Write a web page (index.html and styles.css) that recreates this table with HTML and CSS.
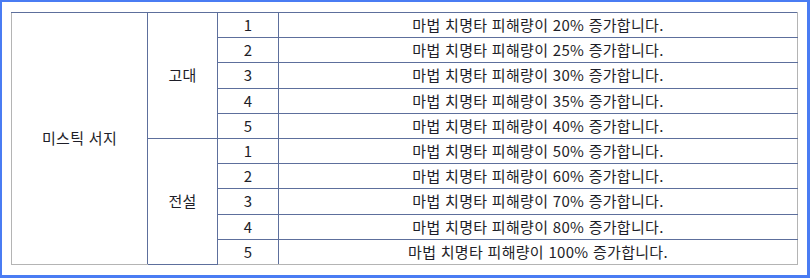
FILE: index.html
```html
<!DOCTYPE html>
<html lang="ko">
<head>
<meta charset="utf-8">
<link rel="stylesheet" href="styles.css">
</head>
<body>
<div class="frame">
  <table class="skill">
    <colgroup>
      <col class="c-name"><col class="c-tier"><col class="c-lv"><col class="c-desc">
    </colgroup>
    <tbody>
      <tr><td class="name" rowspan="10">미스틱 서지</td><td class="tier" rowspan="5">고대</td><td class="lv">1</td><td class="desc">마법 치명타 피해량이 20% 증가합니다.</td></tr>
      <tr><td class="lv">2</td><td class="desc">마법 치명타 피해량이 25% 증가합니다.</td></tr>
      <tr><td class="lv">3</td><td class="desc">마법 치명타 피해량이 30% 증가합니다.</td></tr>
      <tr><td class="lv">4</td><td class="desc">마법 치명타 피해량이 35% 증가합니다.</td></tr>
      <tr><td class="lv">5</td><td class="desc">마법 치명타 피해량이 40% 증가합니다.</td></tr>
      <tr><td class="tier" rowspan="5">전설</td><td class="lv">1</td><td class="desc">마법 치명타 피해량이 50% 증가합니다.</td></tr>
      <tr><td class="lv">2</td><td class="desc">마법 치명타 피해량이 60% 증가합니다.</td></tr>
      <tr><td class="lv">3</td><td class="desc">마법 치명타 피해량이 70% 증가합니다.</td></tr>
      <tr><td class="lv">4</td><td class="desc">마법 치명타 피해량이 80% 증가합니다.</td></tr>
      <tr><td class="lv">5</td><td class="desc">마법 치명타 피해량이 100% 증가합니다.</td></tr>
    </tbody>
  </table>
</div>
</body>
</html>
```
FILE: styles.css
```css
html, body {
  margin: 0;
  padding: 0;
  background: #ffffff;
}
.frame {
  box-sizing: border-box;
  width: 810px;
  height: 278px;
  border-style: solid;
  border-color: #4a7cf3;
  border-width: 2px 3px 3px 2px;
  padding: 10px 0 0 9px;
}
.skill {
  border-collapse: collapse;
  width: 787px;
  font-family: "Noto Sans CJK KR", "Noto Sans", sans-serif;
  font-size: 15px;
  letter-spacing: 0.3px;
  color: #1e1e28;
  border-left: 1px solid #b4b4b4;
  border-right: 1px solid #b4b4b4;
  border-bottom: 1px solid #b4b4b4;
}
.c-name { width: 136px; }
.c-tier { width: 70px; }
.c-lv { width: 61px; }
.skill td {
  border: 1px solid #5d6f9c;
  height: 24.2px;
  padding: 0;
  text-align: center;
  line-height: 18px;
}
.skill td.name {
  border-left: 1px solid #b4b4b4;
  border-bottom: 1px solid #b4b4b4;
}
.skill tr:last-child td {
  border-bottom: 1px solid #b4b4b4;
}
.skill td.desc {
  border-right: 1px solid #b4b4b4;
}
.skill tr:first-child td {
  border-top: 1px solid #5d6f9c;
}
```
